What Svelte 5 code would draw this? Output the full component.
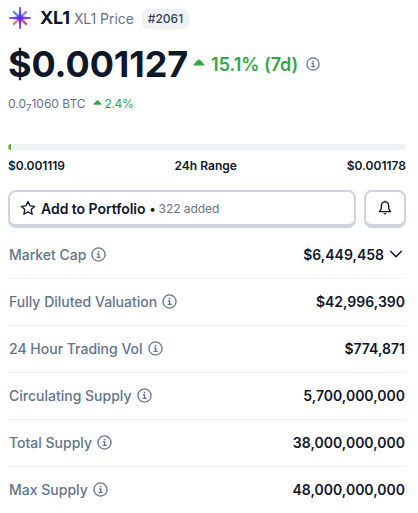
<script>
  const coin = {
    symbol: 'XL1',
    rank: 2061,
    price: '$0.001127',
    change: '15.1%',
    btcChange: '2.4%',
    low: '$0.001119',
    high: '$0.001178',
    rangePercent: 0.8,
    watchers: 322
  };

  const stats = [
    { label: 'Market Cap', value: '$6,449,458', expandable: true },
    { label: 'Fully Diluted Valuation', value: '$42,996,390' },
    { label: '24 Hour Trading Vol', value: '$774,871' },
    { label: 'Circulating Supply', value: '5,700,000,000' },
    { label: 'Total Supply', value: '38,000,000,000' },
    { label: 'Max Supply', value: '48,000,000,000' }
  ];
</script>

{#snippet infoIcon(size)}
  <svg class="info-icon" width={size} height={size} viewBox="0 0 16 16" fill="none" stroke="currentColor">
    <circle cx="8" cy="8" r="7" stroke-width="1.4" />
    <path d="M6.3 7.3h1.9v3.6M6 11h4.3" stroke-width="1.4" />
    <circle cx="8" cy="4.9" r="1" fill="currentColor" stroke="none" />
  </svg>
{/snippet}

<div class="coin-panel">
  <div class="coin-header">
    <svg class="coin-logo" width="24" height="24" viewBox="0 0 24 24">
      <g stroke-width="2.4">
        <path d="M12 12L5.3 5.3" stroke="#5797cf" />
        <path d="M12 12L18.7 5.3" stroke="#9188cc" />
        <path d="M12 12L5.3 18.7" stroke="#f47c54" />
        <path d="M12 12L18.7 18.7" stroke="#e54886" />
      </g>
      <path d="M12 1l1.2 9.8L23 12l-9.8 1.2L12 23l-1.2-9.8L1 12l9.8-1.2z" fill="#5b2cff" stroke="#5b2cff" stroke-width="0.8" />
    </svg>
    <h1>{coin.symbol} <span>{coin.symbol} Price</span></h1>
    <span class="rank">#{coin.rank}</span>
  </div>

  <div class="price-row">
    <span class="price">{coin.price}</span>
    <svg class="caret" width="12" height="7" viewBox="0 0 14 8"><path d="M1 7.4q-.9-.4 0-1.3L5.8.9q1.2-1 2.4 0L13 6.1q.9.9 0 1.3z" /></svg>
    <span class="change">{coin.change} (7d)</span>
    {@render infoIcon(14)}
  </div>

  <div class="btc-row">
    <span>0.0<sub>7</sub>1060 BTC</span>
    <svg class="caret" width="9" height="5" viewBox="0 0 14 8"><path d="M1 7.4q-.9-.4 0-1.3L5.8.9q1.2-1 2.4 0L13 6.1q.9.9 0 1.3z" /></svg>
    <span class="btc-change">{coin.btcChange}</span>
  </div>

  <div class="range-bar">
    <div class="range-fill" style="width: {coin.rangePercent}%"></div>
  </div>
  <div class="range-labels">
    <span>{coin.low}</span>
    <span>24h Range</span>
    <span>{coin.high}</span>
  </div>

  <div class="actions">
    <button class="btn btn-portfolio">
      <svg width="16" height="16" viewBox="0 0 16 16" fill="none" stroke="currentColor" stroke-width="1.3" stroke-linejoin="round">
        <path d="M8 1.4l2 4.4 4.8.5-3.6 3.2 1 4.8L8 11.9l-4.2 2.4 1-4.8L1.2 6.3 6 5.8z" />
      </svg>
      <span class="btn-label">Add to Portfolio</span>
      <span class="dot">•</span>
      <span class="watchers">{coin.watchers} added</span>
    </button>
    <button class="btn btn-alert" aria-label="Price alert">
      <svg width="16" height="16" viewBox="0 0 16 16" fill="none" stroke="currentColor" stroke-width="1.3" stroke-linejoin="round">
        <path d="M8 1.9C5.5 1.9 4.3 3.7 4.3 6v2.8L2.4 11.7h11.2l-1.9-2.9V6c0-2.3-1.2-4.1-3.7-4.1zM8 .8v1.1" />
        <path d="M6.7 13.5q1.3 1.5 2.6 0z" fill="currentColor" stroke-width="0.6" />
      </svg>
    </button>
  </div>

  <div class="stats">
    {#each stats as stat}
      <div class="stat-row">
        <span class="stat-label">{stat.label} {@render infoIcon(15)}</span>
        <span class="stat-value">
          {stat.value}
          {#if stat.expandable}
            <svg class="chevron" width="14" height="8" viewBox="0 0 14 8" fill="none" stroke="currentColor" stroke-width="1.5">
              <path d="M1.3 1L7 6.7 12.7 1" />
            </svg>
          {/if}
        </span>
      </div>
    {/each}
  </div>
</div>

<style>
  :global(body) {
    background: #fff;
  }

  .coin-panel {
    box-sizing: border-box;
    width: 418px;
    height: 513px;
    padding: 6px 12px 0 8px;
    overflow: hidden;
    font-family: Inter, 'Liberation Sans', sans-serif;
    color: #0f172a;
  }

  .coin-header {
    display: flex;
    align-items: center;
    height: 24px;
  }

  h1 {
    margin: 0 8px 0 8px;
    font-size: 18px;
    line-height: 24px;
    font-weight: 700;
    letter-spacing: -0.2px;
    white-space: nowrap;
  }

  h1 span {
    font-size: 14px;
    font-weight: 400;
    letter-spacing: -0.06px;
    color: #64748b;
  }

  .rank {
    margin-top: 1px;
    padding: 0 6px;
    border-radius: 6px;
    background: #eff2f5;
    color: #334155;
    font-size: 12px;
    line-height: 20px;
    font-weight: 500;
  }

  .price-row {
    display: flex;
    align-items: center;
    height: 44px;
    margin-top: 12px;
    color: #32a645;
  }

  .price {
    margin-right: 5px;
    font-size: 36px;
    line-height: 44px;
    font-weight: 700;
    letter-spacing: -0.1px;
    color: #0f172a;
  }

  .caret {
    flex: none;
    fill: #32a645;
  }

  .price-row .caret {
    margin-bottom: 3px;
  }

  .change {
    margin: 0 8px 0 6px;
    font-size: 18px;
    font-weight: 600;
  }

  .info-icon {
    flex: none;
    color: #64748b;
  }

  .btc-row {
    display: flex;
    align-items: center;
    height: 16px;
    margin-top: 9px;
    font-size: 12px;
    color: #64748b;
  }

  .btc-row .caret {
    margin: 0 4px 1px 7px;
  }

  sub {
    font-size: 9.6px;
    line-height: 0;
  }

  .btc-change {
    margin-left: -1px;
    letter-spacing: -0.4px;
    color: #32a645;
  }

  .range-bar {
    height: 6px;
    margin-top: 33px;
    border-radius: 3px;
    background: #eff2f5;
    overflow: hidden;
  }

  .range-fill {
    height: 6px;
    background: linear-gradient(to right, #c0c528, #32a645);
  }

  .range-labels {
    display: flex;
    justify-content: space-between;
    margin-top: 8px;
    font-size: 12px;
    line-height: 16px;
    font-weight: 600;
  }

  .range-labels span:first-child {
    letter-spacing: -0.1px;
  }

  .actions {
    display: flex;
    gap: 8px;
    margin-top: 16px;
  }

  .btn {
    display: flex;
    align-items: center;
    box-sizing: border-box;
    height: 38px;
    padding: 0 10px;
    border: 2px solid #cbd5e1;
    border-bottom-width: 4px;
    border-radius: 8px;
    background: #fff;
    color: #0f172a;
    font-family: inherit;
  }

  .btn-portfolio {
    flex: 1;
  }

  .btn-alert {
    width: 42px;
    justify-content: center;
    padding: 0;
  }

  .btn-label {
    margin: 0 4px 0 5px;
    font-size: 14px;
    font-weight: 600;
    letter-spacing: -0.04px;
  }

  .dot {
    margin-right: 3px;
    font-size: 12px;
    font-weight: 600;
  }

  .watchers {
    font-size: 12px;
    letter-spacing: -0.05px;
    color: #64748b;
  }

  .stats {
    margin-top: 4px;
  }

  .stat-row {
    display: flex;
    align-items: center;
    justify-content: space-between;
    box-sizing: border-box;
    height: 47px;
    padding: 0 1px 2px;
    border-bottom: 1px solid #eff2f5;
    font-size: 14px;
  }

  .stat-row:last-child {
    border-bottom-color: transparent;
  }

  .stat-label,
  .stat-value {
    display: flex;
    align-items: center;
    gap: 5px;
  }

  .stat-label {
    font-weight: 500;
    color: #64748b;
  }

  .stat-value {
    font-weight: 600;
  }

  .chevron {
    margin-right: 2px;
  }
</style>
